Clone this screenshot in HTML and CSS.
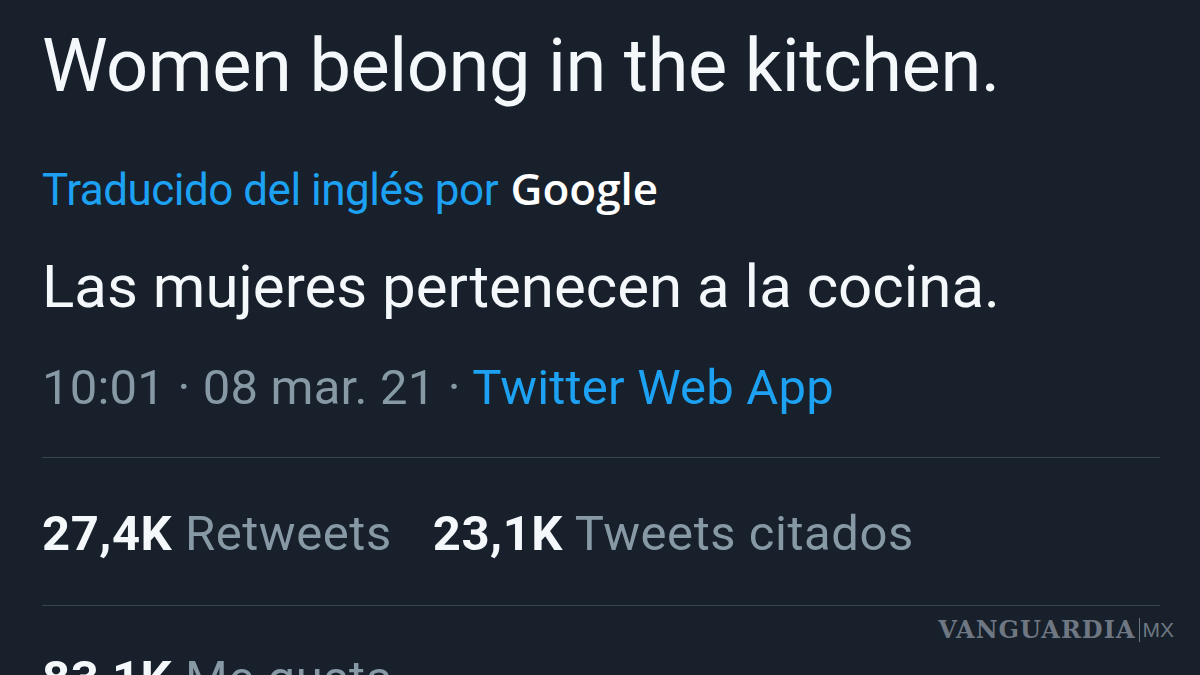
FILE: index.html
```html
<!DOCTYPE html>
<html lang="es">
<head>
<meta charset="utf-8">
<title>Tweet</title>
<link rel="stylesheet" href="styles.css">
</head>
<body>
<main class="tweet">
  <p class="original">Women belong in the kitchen.</p>
  <p class="translated-by"><span class="link">Traducido del inglés por</span> <span class="google">Google</span></p>
  <p class="translation">Las mujeres pertenecen a la cocina.</p>
  <p class="meta">10:01 · 08 mar. 21 · <span class="link">Twitter Web App</span></p>
  <div class="stats">
    <span class="stat"><b>27,4K</b> Retweets</span>
    <span class="stat"><b>23,1K</b> Tweets citados</span>
  </div>
  <div class="stats stats-last">
    <span class="stat"><b>83,1K</b> Me gusta</span>
  </div>
  <div class="watermark"><span class="wm-name">VANGUARDIA</span><span class="wm-mx">MX</span></div>
</main>
</body>
</html>
```
FILE: styles.css
```css
html, body {
  margin: 0;
  padding: 0;
  background: #17202b;
  width: 1200px;
  height: 675px;
  overflow: hidden;
}
.tweet {
  position: relative;
  padding: 0 40px 0 42px;
  font-family: Roboto, "Liberation Sans", sans-serif;
  color: #f5f8fa;
  height: 675px;
  box-sizing: border-box;
  overflow: hidden;
}
p { margin: 0; }
.original {
  font-size: 74px;
  line-height: 1;
  padding-top: 29px;
  letter-spacing: -0.45px;
}
.translated-by {
  font-size: 44px;
  line-height: 1;
  margin-top: 63px;
  letter-spacing: -0.5px;
}
.link { color: #1da1f2; }
.google {
  font-family: "Open Sans", sans-serif;
  font-weight: 600;
  color: #ffffff;
  letter-spacing: 0;
  margin-left: 2px;
}
.translation {
  font-size: 60px;
  line-height: 1;
  margin-top: 45px;
  letter-spacing: 0;
}
.meta {
  font-size: 49px;
  line-height: 1;
  margin-top: 46px;
  color: #8899a6;
  letter-spacing: 0.2px;
  padding-bottom: 45px;
  border-bottom: 1px solid #38444d;
}
.stats {
  display: flex;
  gap: 41px;
  font-size: 49px;
  line-height: 1;
  color: #8899a6;
  padding: 51px 0 47px;
  border-bottom: 1px solid #38444d;
  letter-spacing: 0.55px;
}
.stats b { color: #f5f8fa; font-weight: 700; }
.stats-last { border-bottom: none; padding-top: 48px; }
.watermark {
  position: absolute;
  right: 26px;
  top: 615px;
  display: flex;
  align-items: center;
  color: #6e7782;
}
.wm-name {
  font-family: "DejaVu Serif", "Liberation Serif", serif;
  font-weight: 700;
  font-size: 24px;
  letter-spacing: 1px;
}
.wm-mx {
  font-family: "Liberation Sans", sans-serif;
  font-size: 21px;
  font-weight: 300;
  border-left: 1px solid #6e7782;
  padding-left: 3px;
  margin-left: 3px;
  letter-spacing: 0;
}
```
